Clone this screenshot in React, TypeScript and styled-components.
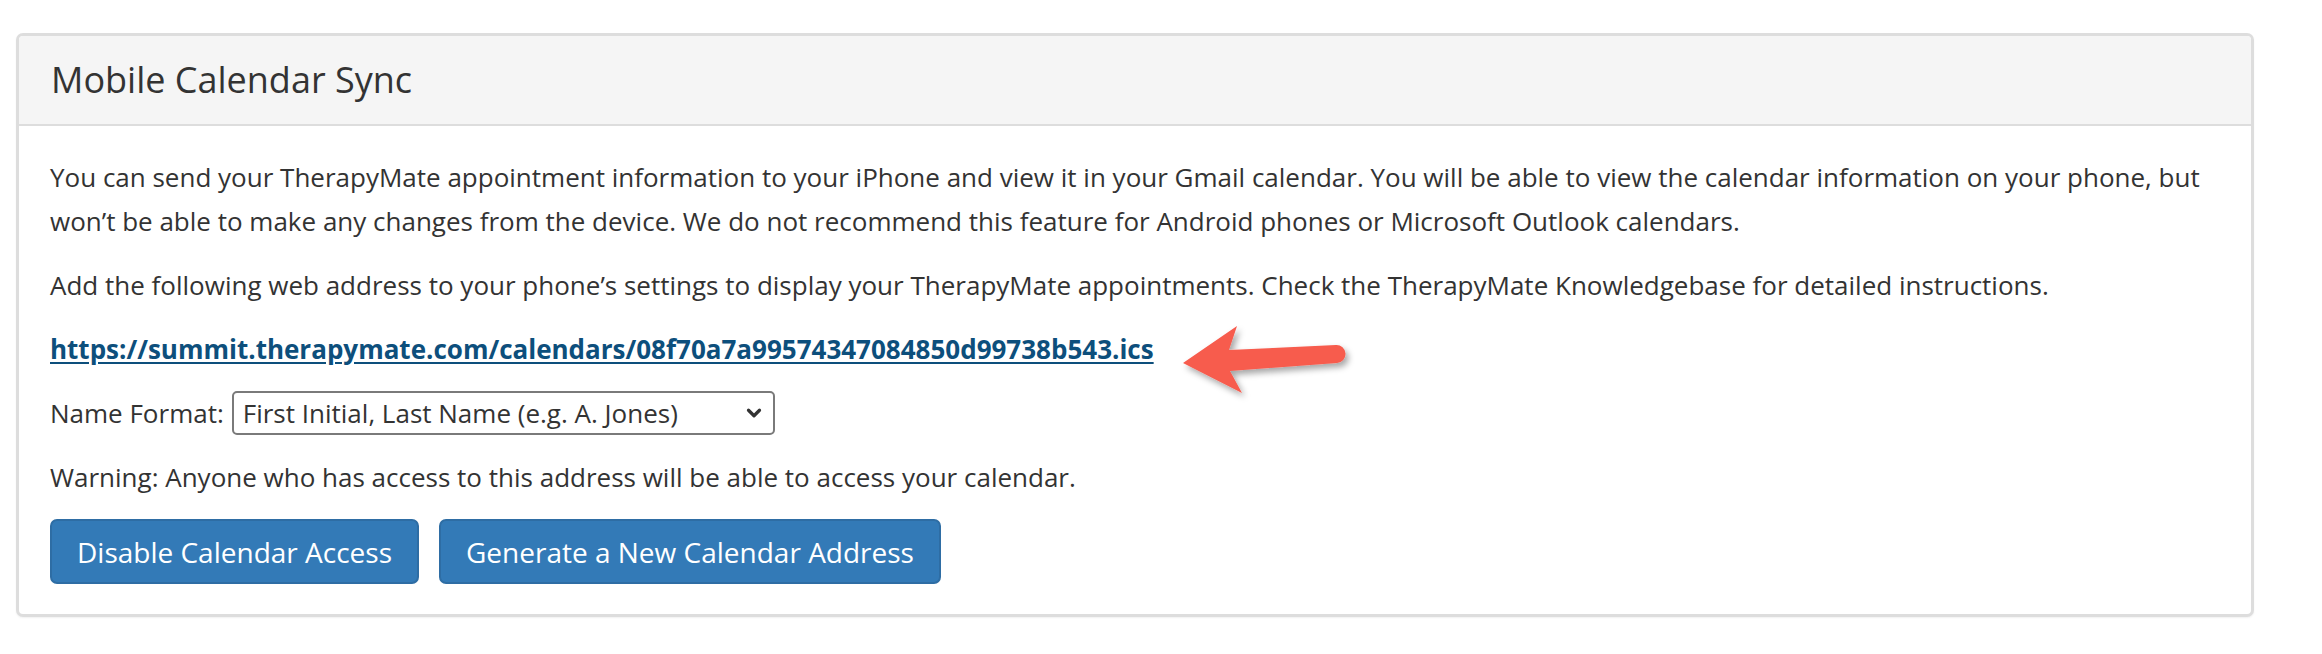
import React from "react";
import styled, { createGlobalStyle } from "styled-components";
import { ChevronDown } from "lucide-react";

const GlobalStyle = createGlobalStyle`
  body {
    margin: 0;
    background: #ffffff;
    font-family: "Open Sans", "Liberation Sans", sans-serif;
    color: #333333;
  }
`;

const Page = styled.div`
  padding: 33px 68px 36px 16px;
`;

const Panel = styled.section`
  border: 3px solid #dddddd;
  border-radius: 7px;
  background: #ffffff;
  box-shadow: 0 1px 2px rgba(0, 0, 0, 0.06);
  overflow: hidden;
`;

const PanelHeading = styled.header`
  background: #f5f5f5;
  border-bottom: 2px solid #dddddd;
  height: 88px;
  padding: 0 32px;
  display: flex;
  align-items: center;
`;

const PanelTitle = styled.h3`
  margin: 0;
  font-size: 36px;
  font-weight: 400;
  color: #333333;
  line-height: 1;
`;

const PanelBody = styled.div`
  padding: 29px 31px 30px 31px;
  font-size: 26px;
  line-height: 44px;
`;

const Text = styled.p`
  margin: 0 0 20px;
`;

const LinkRow = styled.p`
  margin: 0 0 20px;
  white-space: nowrap;
`;

const CalendarLink = styled.a`
  color: #0d4f7c;
  font-weight: 700;
  text-decoration: underline;
  text-underline-offset: 3px;
`;

const ArrowAnchor = styled.span`
  display: inline-block;
  position: relative;
  width: 0;
  height: 44px;
  vertical-align: top;
`;

const ArrowMark = styled.svg`
  position: absolute;
  left: 23px;
  top: -6px;
  overflow: visible;
`;

const FormRow = styled.div`
  display: flex;
  align-items: center;
  gap: 8px;
  height: 44px;
  margin: 0 0 20px;
`;

const Label = styled.label`
  font-size: 26px;
`;

const SelectWrap = styled.span`
  position: relative;
  display: inline-flex;
`;

const Select = styled.select`
  appearance: none;
  -webkit-appearance: none;
  width: 543px;
  height: 44px;
  border: 2px solid #7a7a7a;
  border-radius: 5px;
  background: #ffffff;
  padding: 0 40px 0 9px;
  font-family: "Open Sans", "Liberation Sans", sans-serif;
  font-size: 26px;
  color: #333333;
`;

const Chevron = styled(ChevronDown)`
  position: absolute;
  right: 10px;
  top: 50%;
  transform: translateY(-50%);
  pointer-events: none;
  color: #333333;
`;

const ButtonRow = styled.div`
  display: flex;
  gap: 20px;
`;

const Button = styled.button`
  height: 65px;
  padding: 0 25px;
  background: #337ab7;
  border: 2px solid #2e6da4;
  border-radius: 7px;
  color: #ffffff;
  font-family: "Open Sans", "Liberation Sans", sans-serif;
  font-size: 28px;
  cursor: pointer;
`;

const App = () => {
  return (
    <>
      <GlobalStyle />
      <Page>
        <Panel>
          <PanelHeading>
            <PanelTitle>Mobile Calendar Sync</PanelTitle>
          </PanelHeading>
          <PanelBody>
            <Text>
              You can send your TherapyMate appointment information to your iPhone and view it in your Gmail
              calendar. You will be able to view the calendar information on your phone, but won’t be able to make
              any changes from the device. We do not recommend this feature for Android phones or Microsoft Outlook
              calendars.
            </Text>
            <Text>
              Add the following web address to your phone’s settings to display your TherapyMate appointments. Check
              the TherapyMate Knowledgebase for detailed instructions.
            </Text>
            <LinkRow>
              <CalendarLink href="#">
                https://summit.therapymate.com/calendars/08f70a7a99574347084850d99738b543.ics
              </CalendarLink>
              <ArrowAnchor>
                <ArrowMark width="180" height="80" viewBox="0 0 180 80">
                  <defs>
                    <filter id="arrowShadow" x="-20%" y="-30%" width="140%" height="170%">
                      <feDropShadow dx="3" dy="4" stdDeviation="3" floodColor="#000" floodOpacity="0.35" />
                    </filter>
                  </defs>
                  <path
                    d="M6 42 L60 5 L52 29 L159 24 A9 9 0 0 1 160 42 L53 50 L65 72 Z"
                    fill="#f75b4d"
                    filter="url(#arrowShadow)"
                  />
                </ArrowMark>
              </ArrowAnchor>
            </LinkRow>
            <FormRow>
              <Label htmlFor="nameFormat">Name Format:</Label>
              <SelectWrap>
                <Select id="nameFormat" defaultValue="initial">
                  <option value="initial">First Initial, Last Name (e.g. A. Jones)</option>
                  <option value="full">First Name, Last Name (e.g. Anna Jones)</option>
                  <option value="last">Last Name Only (e.g. Jones)</option>
                </Select>
                <Chevron size={22} strokeWidth={3.5} />
              </SelectWrap>
            </FormRow>
            <Text>Warning: Anyone who has access to this address will be able to access your calendar.</Text>
            <ButtonRow>
              <Button type="button">Disable Calendar Access</Button>
              <Button type="button">Generate a New Calendar Address</Button>
            </ButtonRow>
          </PanelBody>
        </Panel>
      </Page>
    </>
  );
};

export default App;
